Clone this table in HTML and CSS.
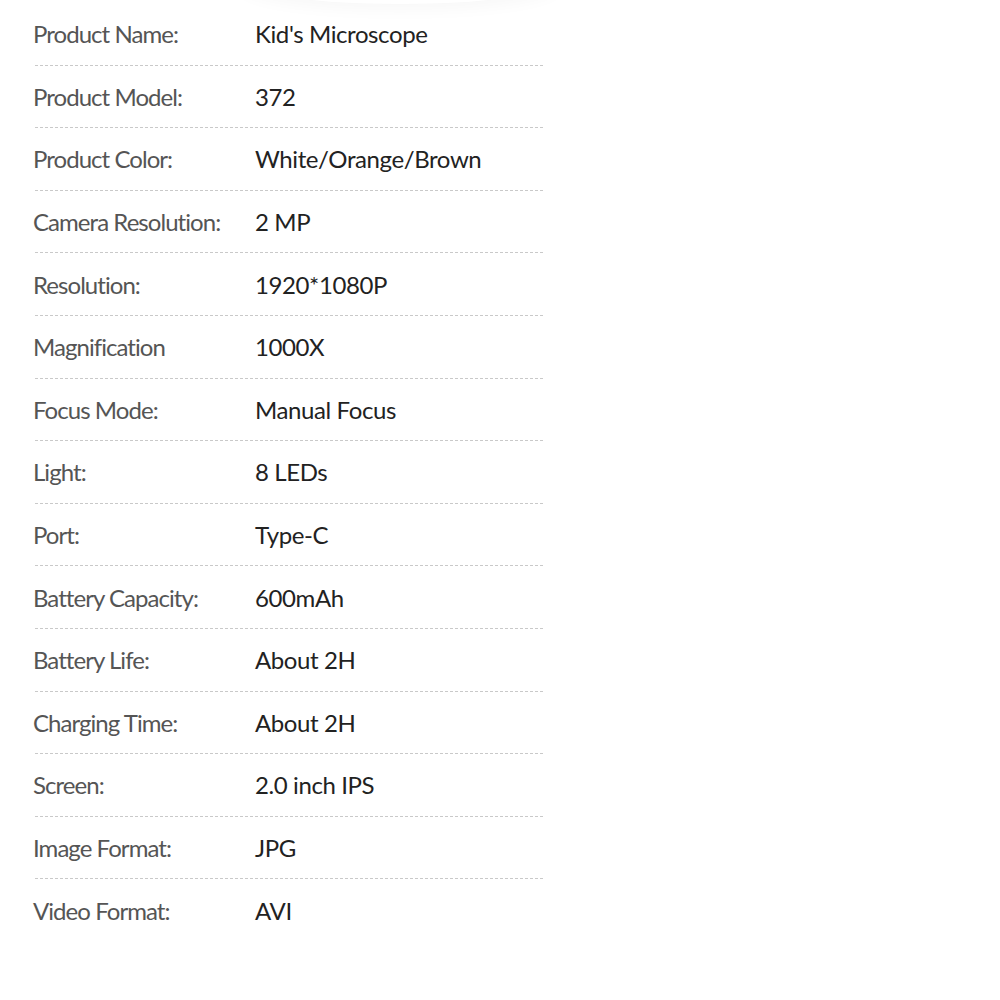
FILE: index.html
```html
<!DOCTYPE html>
<html>
<head>
<meta charset="utf-8">
<link rel="stylesheet" href="styles.css">
</head>
<body>
<div class="page">
  <div class="top-shade"></div>
  <div class="specs">
    <div class="row"><span class="label">Product Name:</span><span class="value">Kid's Microscope</span></div>
    <div class="row"><span class="label">Product Model:</span><span class="value">372</span></div>
    <div class="row"><span class="label">Product Color:</span><span class="value">White/Orange/Brown</span></div>
    <div class="row"><span class="label">Camera Resolution:</span><span class="value">2 MP</span></div>
    <div class="row"><span class="label">Resolution:</span><span class="value">1920*1080P</span></div>
    <div class="row"><span class="label">Magnification</span><span class="value">1000X</span></div>
    <div class="row"><span class="label">Focus Mode:</span><span class="value">Manual Focus</span></div>
    <div class="row"><span class="label">Light:</span><span class="value">8 LEDs</span></div>
    <div class="row"><span class="label">Port:</span><span class="value">Type-C</span></div>
    <div class="row"><span class="label">Battery Capacity:</span><span class="value">600mAh</span></div>
    <div class="row"><span class="label">Battery Life:</span><span class="value">About 2H</span></div>
    <div class="row"><span class="label">Charging Time:</span><span class="value">About 2H</span></div>
    <div class="row"><span class="label">Screen:</span><span class="value">2.0 inch IPS</span></div>
    <div class="row"><span class="label">Image Format:</span><span class="value">JPG</span></div>
    <div class="row last"><span class="label">Video Format:</span><span class="value">AVI</span></div>
  </div>
</div>
</body>
</html>
```
FILE: styles.css
```css
html, body {
  margin: 0;
  padding: 0;
  background: #ffffff;
}
.page {
  position: relative;
  width: 1000px;
  height: 1000px;
  overflow: hidden;
}
.top-shade {
  position: absolute;
  left: 240px;
  top: -44px;
  width: 320px;
  height: 48px;
  border-radius: 50%;
  box-shadow: 0 6px 16px rgba(0,0,0,0.03);
  background: #fff;
}
.specs {
  padding-top: 3px;
  width: 543px;
  font-family: "Lato", "Noto Sans", sans-serif;
  font-size: 24px;
}
.row {
  display: flex;
  align-items: center;
  height: 62.6px;
  margin-left: 35px;
  border-bottom: 1px dashed #c9c9c9;
  box-sizing: border-box;
}
.row.last {
  border-bottom: none;
}
.label {
  width: 222px;
  margin-left: -2px;
  color: #555555;
  letter-spacing: -0.95px;
}
.value {
  color: #222222;
  letter-spacing: -0.4px;
}
```
